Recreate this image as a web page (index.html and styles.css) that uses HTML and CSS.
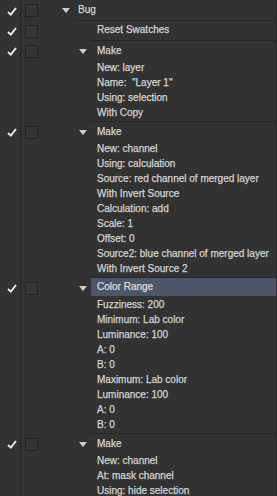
FILE: index.html
```html
<!DOCTYPE html>
<html>
  <head>
    <title>Actions</title>
    <link rel="stylesheet" href="styles.css">
  </head>

  <body>
    <div class="panel">
      <!-- Action: Bug -->
      <div class="row head">
        <span class="chk"><svg width="10" height="9" viewBox="0 0 10 9"><path d="M1 5 L3.8 7.6 L9 1" fill="none" stroke="#ececec" stroke-width="1.9"/></svg></span>
        <span class="toggle"><span class="box"></span></span>
        <span class="tri tri-1"></span>
        <span class="label label-1 last">Bug</span>
      </div>

      <!-- Reset Swatches -->
      <div class="row head">
        <span class="chk"><svg width="10" height="9" viewBox="0 0 10 9"><path d="M1 5 L3.8 7.6 L9 1" fill="none" stroke="#ececec" stroke-width="1.9"/></svg></span>
        <span class="toggle"><span class="box"></span></span>
        <span class="tri-space"></span>
        <span class="label last">Reset Swatches</span>
      </div>

      <!-- Make layer -->
      <div class="row head">
        <span class="chk"><svg width="10" height="9" viewBox="0 0 10 9"><path d="M1 5 L3.8 7.6 L9 1" fill="none" stroke="#ececec" stroke-width="1.9"/></svg></span>
        <span class="toggle"><span class="box"></span></span>
        <span class="tri"></span>
        <span class="label">Make</span>
      </div>
      <div class="row item"><span class="chk"></span><span class="toggle"></span><span class="tri-space"></span><span class="label">New: layer</span></div>
      <div class="row item"><span class="chk"></span><span class="toggle"></span><span class="tri-space"></span><span class="label">Name:&nbsp; "Layer 1"</span></div>
      <div class="row item"><span class="chk"></span><span class="toggle"></span><span class="tri-space"></span><span class="label">Using: selection</span></div>
      <div class="row item end-item"><span class="chk"></span><span class="toggle"></span><span class="tri-space"></span><span class="label last">With Copy</span></div>

      <!-- Make channel -->
      <div class="row head">
        <span class="chk"><svg width="10" height="9" viewBox="0 0 10 9"><path d="M1 5 L3.8 7.6 L9 1" fill="none" stroke="#ececec" stroke-width="1.9"/></svg></span>
        <span class="toggle"><span class="box"></span></span>
        <span class="tri"></span>
        <span class="label">Make</span>
      </div>
      <div class="row item"><span class="chk"></span><span class="toggle"></span><span class="tri-space"></span><span class="label">New: channel</span></div>
      <div class="row item"><span class="chk"></span><span class="toggle"></span><span class="tri-space"></span><span class="label">Using: calculation</span></div>
      <div class="row item"><span class="chk"></span><span class="toggle"></span><span class="tri-space"></span><span class="label">Source: red channel of merged layer</span></div>
      <div class="row item"><span class="chk"></span><span class="toggle"></span><span class="tri-space"></span><span class="label">With Invert Source</span></div>
      <div class="row item"><span class="chk"></span><span class="toggle"></span><span class="tri-space"></span><span class="label">Calculation: add</span></div>
      <div class="row item"><span class="chk"></span><span class="toggle"></span><span class="tri-space"></span><span class="label">Scale: 1</span></div>
      <div class="row item"><span class="chk"></span><span class="toggle"></span><span class="tri-space"></span><span class="label">Offset: 0</span></div>
      <div class="row item"><span class="chk"></span><span class="toggle"></span><span class="tri-space"></span><span class="label">Source2: blue channel of merged layer</span></div>
      <div class="row item end-item"><span class="chk"></span><span class="toggle"></span><span class="tri-space"></span><span class="label last">With Invert Source 2</span></div>

      <!-- Color Range (selected) -->
      <div class="row head">
        <span class="chk"><svg width="10" height="9" viewBox="0 0 10 9"><path d="M1 5 L3.8 7.6 L9 1" fill="none" stroke="#ececec" stroke-width="1.9"/></svg></span>
        <span class="toggle"><span class="box"></span></span>
        <span class="tri"></span>
        <span class="label selected">Color Range</span>
      </div>
      <div class="row item"><span class="chk"></span><span class="toggle"></span><span class="tri-space"></span><span class="label">Fuzziness: 200</span></div>
      <div class="row item"><span class="chk"></span><span class="toggle"></span><span class="tri-space"></span><span class="label">Minimum: Lab color</span></div>
      <div class="row item"><span class="chk"></span><span class="toggle"></span><span class="tri-space"></span><span class="label">Luminance: 100</span></div>
      <div class="row item"><span class="chk"></span><span class="toggle"></span><span class="tri-space"></span><span class="label">A: 0</span></div>
      <div class="row item"><span class="chk"></span><span class="toggle"></span><span class="tri-space"></span><span class="label">B: 0</span></div>
      <div class="row item"><span class="chk"></span><span class="toggle"></span><span class="tri-space"></span><span class="label">Maximum: Lab color</span></div>
      <div class="row item"><span class="chk"></span><span class="toggle"></span><span class="tri-space"></span><span class="label">Luminance: 100</span></div>
      <div class="row item"><span class="chk"></span><span class="toggle"></span><span class="tri-space"></span><span class="label">A: 0</span></div>
      <div class="row item end-item"><span class="chk"></span><span class="toggle"></span><span class="tri-space"></span><span class="label last">B: 0</span></div>

      <!-- Make channel 2 -->
      <div class="row head">
        <span class="chk"><svg width="10" height="9" viewBox="0 0 10 9"><path d="M1 5 L3.8 7.6 L9 1" fill="none" stroke="#ececec" stroke-width="1.9"/></svg></span>
        <span class="toggle"><span class="box"></span></span>
        <span class="tri"></span>
        <span class="label">Make</span>
      </div>
      <div class="row item"><span class="chk"></span><span class="toggle"></span><span class="tri-space"></span><span class="label">New: channel</span></div>
      <div class="row item"><span class="chk"></span><span class="toggle"></span><span class="tri-space"></span><span class="label">At: mask channel</span></div>
      <div class="row item"><span class="chk"></span><span class="toggle"></span><span class="tri-space"></span><span class="label">Using: hide selection</span></div>

      <div class="row end"><span class="chk"></span><span class="end-line"></span></div>
    </div>
  </body>
</html>
```

FILE: styles.css
```css
body {
  margin: 0;
  background-color: #323232;
  font-family: "Liberation Sans", Arial, sans-serif;
  font-size: 10px;
  color: #d4d4d4;
  -webkit-text-stroke: 0.25px #d4d4d4;
}

.panel {
  width: 276px;
  height: 496px;
  border-right: 1px solid #2a2a2a;
  overflow: hidden;
}

/* rows */
.row {
  display: flex;
  align-items: stretch;
}

.head {
  height: 20px;
}

.head:first-child {
  height: 21px;
}

.item {
  height: 15px;
}

.end-item {
  height: 16px;
}

/* check column */
.chk {
  width: 21px;
  flex-shrink: 0;
  border-right: 1px solid #262626;
  display: flex;
  align-items: center;
  padding-left: 7px;
  padding-top: 1px;
  box-sizing: border-box;
}

/* dialog toggle column */
.toggle {
  width: 21px;
  flex-shrink: 0;
  display: flex;
  align-items: center;
  padding-left: 4px;
  box-sizing: border-box;
}

.box {
  width: 11px;
  height: 11px;
  border: 1px solid #222;
  background-color: #353535;
}

/* disclosure triangles */
.tri {
  width: 0;
  height: 0;
  margin-left: 37px;
  margin-right: 4px;
  align-self: center;
  border-left: 4px solid transparent;
  border-right: 4px solid transparent;
  border-top: 5px solid #cfcfcf;
}

.tri-1 {
  margin-left: 20px;
  margin-right: 5px;
}

.tri-space {
  width: 49px;
  flex-shrink: 0;
}

/* labels */
.label {
  flex: 1;
  display: flex;
  align-items: center;
  padding-left: 6px;
  padding-bottom: 2px;
  white-space: nowrap;
  box-sizing: border-box;
}

.label-1 {
  padding-left: 3px;
}

.last {
  border-bottom: 1px solid #262626;
}

.selected {
  background-color: #4c5669;
  color: #e2e2e2;
  margin-bottom: 2px;
}

.end {
  height: 1px;
}

.end-line {
  flex: 1;
  margin-left: 21px;
  border-top: 1px solid #262626;
}
```
